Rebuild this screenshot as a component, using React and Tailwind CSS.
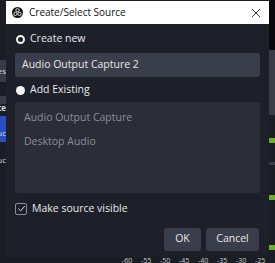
import React, { useState } from 'react';

const font = { fontFamily: '"Open Sans", "Noto Sans", sans-serif' };

function ObsLogo() {
  return (
    <svg width="11" height="11" viewBox="0 0 24 24">
      <circle cx="12" cy="12" r="12" fill="#111" />
      <circle cx="12" cy="7" r="3.6" fill="none" stroke="#fff" strokeWidth="1.8" />
      <circle cx="7.4" cy="15" r="3.6" fill="none" stroke="#fff" strokeWidth="1.8" />
      <circle cx="16.6" cy="15" r="3.6" fill="none" stroke="#fff" strokeWidth="1.8" />
    </svg>
  );
}

function Radio({ checked, label, onClick }) {
  return (
    <button className="flex items-center gap-[5px] h-[16px] text-[#e8e8ea] text-[10.5px]" onClick={onClick}>
      {checked ? (
        <span className="ml-[1px] w-[9px] h-[9px] rounded-full border-[2px] border-[#f4f4f4] bg-[#1e2029]" />
      ) : (
        <span className="ml-[1px] w-[9px] h-[9px] rounded-full bg-[#f4f4f4]" />
      )}
      <span>{label}</span>
    </button>
  );
}

function App() {
  const [mode, setMode] = useState('new');
  const [visible, setVisible] = useState(true);
  const scale = ['-60', '-55', '-50', '-45', '-40', '-35', '-30', '-25'];

  return (
    <div className="w-[275px] h-[263px] overflow-hidden bg-[#1b1d25] flex flex-col" style={font}>
      <div className="flex h-[257px]">
        {/* window behind, left edge */}
        <div className="w-[6px] flex flex-col overflow-hidden text-[8px] text-[#d8d8dc] leading-none">
          <div className="h-[60px]" />
          <div className="h-[22px] bg-[#393c48] flex items-center justify-end">es</div>
          <div className="h-[14px]" />
          <div className="h-[8px] bg-[#393c48]" />
          <div className="h-[8px] flex items-center justify-end font-bold">ce</div>
          <div className="h-[4px]" />
          <div className="h-[26px] bg-[#2a4fc4] flex items-end justify-end pb-[5px]">uc</div>
          <div className="h-[14px]" />
          <div className="h-[8px] flex items-center justify-end">uc</div>
        </div>

        {/* dialog */}
        <div className="w-[263px] flex flex-col">
          <div className="h-[23px] mt-[1px] bg-white flex items-center pl-[6px] pr-[8px]">
            <ObsLogo />
            <span className="ml-[6px] text-[10px] text-[#111]">Create/Select Source</span>
            <span className="ml-auto text-[#333]">
              <svg width="10" height="10" viewBox="0 0 10 10">
                <path d="M1 1 L9 9 M9 1 L1 9" stroke="#333" strokeWidth="1" />
              </svg>
            </span>
          </div>
          <div className="flex-1 bg-[#1e2029] px-[9px] pt-[7px] flex flex-col">
            <Radio checked={mode === 'new'} label="Create new" onClick={() => setMode('new')} />
            <div className="mt-[6px] h-[24px] rounded-[3px] bg-[#3a3d4a] flex items-center px-[7px] text-[10.5px] text-[#e8e8ea]">
              Audio Output Capture 2
            </div>
            <div className="mt-[5px]">
              <Radio checked={mode === 'existing'} label="Add Existing" onClick={() => setMode('existing')} />
            </div>
            <div className="mt-[4px] h-[91px] rounded-[3px] bg-[#2b2d38] flex flex-col pt-[4px] px-[9px] text-[10.5px] text-[#8b8e99]">
              <div className="h-[24px] flex items-center">Audio Output Capture</div>
              <div className="h-[24px] flex items-center">Desktop Audio</div>
            </div>
            <button className="mt-[8px] flex items-center gap-[5px] text-[10.5px] text-[#e8e8ea]" onClick={() => setVisible(!visible)}>
              <span className="w-[12px] h-[12px] rounded-[2px] border border-[#8b8e99] flex items-center justify-center">
                {visible && (
                  <svg width="9" height="9" viewBox="0 0 10 10">
                    <path d="M1.5 5.2 L4 7.6 L8.6 2.4" fill="none" stroke="#e0e0e4" strokeWidth="1.1" />
                  </svg>
                )}
              </span>
              <span>Make source visible</span>
            </button>
            <div className="mt-[11px] flex justify-end gap-[5px] pr-[1px]">
              <button className="w-[37px] h-[23px] rounded-[3px] bg-[#3a3d4a] text-[10.5px] text-[#e8e8ea]">OK</button>
              <button className="w-[53px] h-[23px] rounded-[3px] bg-[#3a3d4a] text-[10.5px] text-[#e8e8ea]">Cancel</button>
            </div>
          </div>
        </div>

        {/* window behind, right edge */}
        <div className="w-[6px] flex flex-col">
          <div className="h-[50px] bg-[#0a0a0c]" />
          <div className="h-[65px] bg-[#3a3d48]" />
          <div className="h-[23px]" />
          <div className="h-[5px] bg-[#6fae2c]" />
          <div className="h-[19px]" />
          <div className="h-[3px] bg-[#3a3d48]" />
          <div className="h-[30px]" />
          <div className="h-[5px] bg-[#6fae2c]" />
          <div className="h-[45px]" />
          <div className="h-[5px] bg-[#6fae2c]" />
        </div>
      </div>

      {/* meter scale behind */}
      <div className="h-[6px] flex pl-[122px] gap-[10px] text-[7px] leading-none text-[#c8c8cc]">
        {scale.map((s) => (
          <span key={s} className="w-[9px]">{s}</span>
        ))}
      </div>
    </div>
  );
}

export default App;
